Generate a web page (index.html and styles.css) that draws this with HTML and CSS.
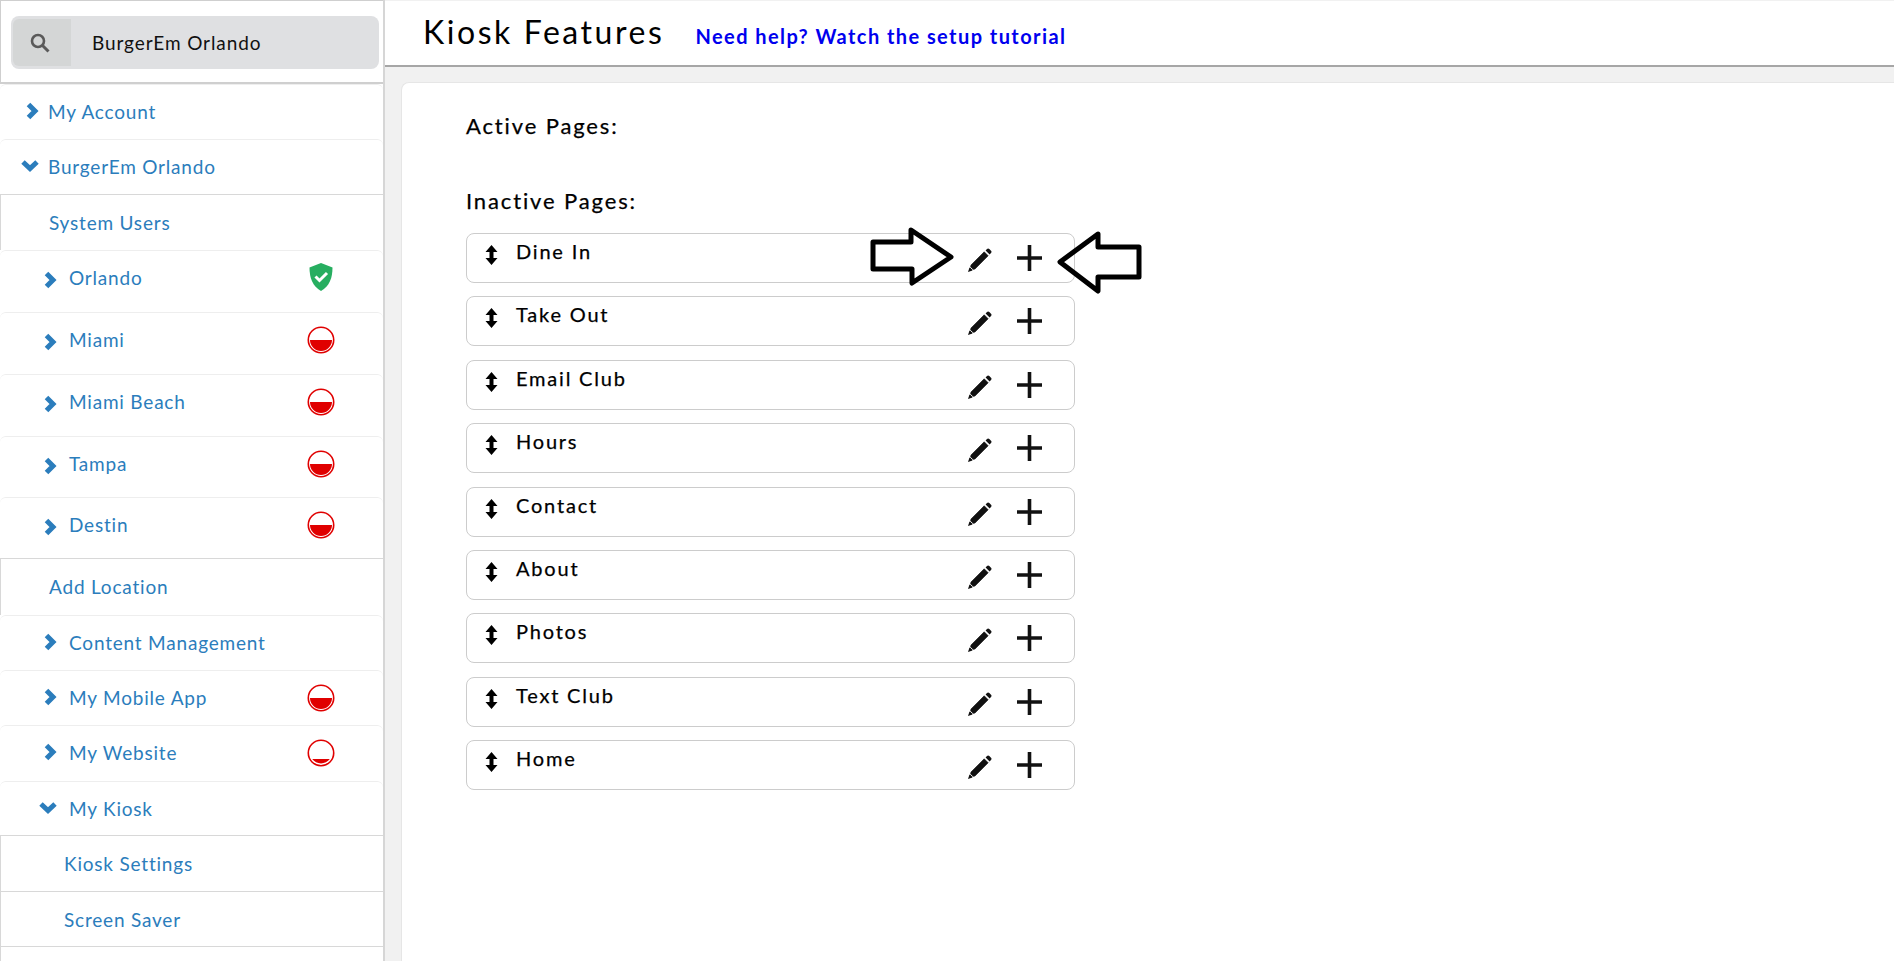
FILE: index.html
```html
<!DOCTYPE html>
<html lang="en">
<head>
<meta charset="utf-8">
<title>Kiosk Features</title>
<link rel="stylesheet" href="styles.css">
</head>
<body>
<svg width="0" height="0" class="defs">
  <symbol id="right" viewBox="0 0 18 18"><polyline points="7.5,2.5 14,9 7.5,15.5" fill="none" stroke="currentColor" stroke-width="5"/></symbol>
  <symbol id="down" viewBox="0 0 18 18"><polyline points="2,5 9,11.5 16,5" fill="none" stroke="currentColor" stroke-width="5"/></symbol>
  <symbol id="half" viewBox="0 0 28 28"><circle cx="14" cy="14" r="12.7" fill="#fff" stroke="#e00000" stroke-width="1.6"/><path d="M3 14H25A11 11 0 0 1 3 14Z" fill="#e00000"/></symbol>
  <symbol id="low" viewBox="0 0 28 28"><circle cx="14" cy="14" r="12.7" fill="#fff" stroke="#e00000" stroke-width="1.6"/><path d="M5.2 20H22.800A11 11 0 0 1 5.2 20Z" fill="#e00000"/></symbol>
  <symbol id="sort" viewBox="0 0 13 20"><path d="M6.500 0L12.500 7H8.500V13H12.500L6.500 20L.5 13H4.500V7H.5Z" fill="#000"/></symbol>
  <symbol id="pencil" viewBox="0 0 25 25"><path d="M17.200 3.800L21.200 7.800L8 21L2.800 22.200L4 17Z" fill="#111" stroke="#111" stroke-width=".6"/><path d="M18.600 2.400L20 1C20.700.3 21.600.3 22.300 1L24 2.700C24.700 3.400 24.700 4.300 24 5L22.600 6.400Z" fill="#111"/><path d="M3.300 19.200L5.800 21.700" stroke="#fff" stroke-width="1"/><path d="M1 24L2.500 19.500L5.500 22.500Z" fill="#111"/></symbol>
  <symbol id="plus" viewBox="0 0 25 26"><path d="M10.700 0H14.300V11.200H25V14.800H14.300V26H10.700V14.800H0V11.200H10.700Z" fill="#111"/></symbol>
</svg>

<aside class="sidebar">
  <div class="search">
    <div class="search-box">
      <span class="search-icon">
        <svg width="20" height="20" viewBox="0 0 20 20"><circle cx="8" cy="8" r="6" fill="none" stroke="#5a5a5a" stroke-width="2.600"/><path d="M12.500 12.500L18.500 18.500" stroke="#5a5a5a" stroke-width="3"/></svg>
      </span>
      <span class="search-text">BurgerEm Orlando</span>
    </div>
  </div>
  <nav class="menu">
    <a class="item top"><svg class="chev"><use href="#right"/></svg><span>My Account</span></a>
    <a class="item top rule"><svg class="chev"><use href="#down"/></svg><span>BurgerEm Orlando</span></a>
    <a class="item sub"><span>System Users</span></a>
    <a class="item nested loc"><svg class="chev"><use href="#right"/></svg><span>Orlando</span>
      <svg class="badge shield" viewBox="0 0 24 28"><path d="M12 0L23.500 4.500C23.500 15 20.500 23 12 28C3.500 23 .5 15 .5 4.500Z" fill="#27ae60"/><path d="M6.500 13.500L10.500 17.500L18 10" fill="none" stroke="#fff" stroke-width="3"/></svg>
    </a>
    <a class="item nested loc"><svg class="chev"><use href="#right"/></svg><span>Miami</span><svg class="badge"><use href="#half"/></svg></a>
    <a class="item nested loc"><svg class="chev"><use href="#right"/></svg><span>Miami Beach</span><svg class="badge"><use href="#half"/></svg></a>
    <a class="item nested loc"><svg class="chev"><use href="#right"/></svg><span>Tampa</span><svg class="badge"><use href="#half"/></svg></a>
    <a class="item nested loc rule"><svg class="chev"><use href="#right"/></svg><span>Destin</span><svg class="badge"><use href="#half"/></svg></a>
    <a class="item sub"><span>Add Location</span></a>
    <a class="item nested"><svg class="chev"><use href="#right"/></svg><span>Content Management</span></a>
    <a class="item nested"><svg class="chev"><use href="#right"/></svg><span>My Mobile App</span><svg class="badge"><use href="#half"/></svg></a>
    <a class="item nested"><svg class="chev"><use href="#right"/></svg><span>My Website</span><svg class="badge"><use href="#low"/></svg></a>
    <a class="item nested rule"><svg class="chev"><use href="#down"/></svg><span>My Kiosk</span></a>
    <a class="item sub deep rule"><span>Kiosk Settings</span></a>
    <a class="item sub deep rule"><span>Screen Saver</span></a>
    <a class="item sub deep"></a>
  </nav>
</aside>

<main class="main">
  <header class="header">
    <h1 class="title">Kiosk Features</h1>
    <a class="help">Need help? Watch the setup tutorial</a>
  </header>
  <div class="body">
    <section class="card">
      <h2 class="heading">Active Pages:</h2>
      <h2 class="heading inactive">Inactive Pages:</h2>
      <ul class="pages">
        <li class="page"><svg class="sort"><use href="#sort"/></svg><span class="name">Dine In</span><svg class="edit"><use href="#pencil"/></svg><svg class="add"><use href="#plus"/></svg></li>
        <li class="page"><svg class="sort"><use href="#sort"/></svg><span class="name">Take Out</span><svg class="edit"><use href="#pencil"/></svg><svg class="add"><use href="#plus"/></svg></li>
        <li class="page"><svg class="sort"><use href="#sort"/></svg><span class="name">Email Club</span><svg class="edit"><use href="#pencil"/></svg><svg class="add"><use href="#plus"/></svg></li>
        <li class="page"><svg class="sort"><use href="#sort"/></svg><span class="name">Hours</span><svg class="edit"><use href="#pencil"/></svg><svg class="add"><use href="#plus"/></svg></li>
        <li class="page"><svg class="sort"><use href="#sort"/></svg><span class="name">Contact</span><svg class="edit"><use href="#pencil"/></svg><svg class="add"><use href="#plus"/></svg></li>
        <li class="page"><svg class="sort"><use href="#sort"/></svg><span class="name">About</span><svg class="edit"><use href="#pencil"/></svg><svg class="add"><use href="#plus"/></svg></li>
        <li class="page"><svg class="sort"><use href="#sort"/></svg><span class="name">Photos</span><svg class="edit"><use href="#pencil"/></svg><svg class="add"><use href="#plus"/></svg></li>
        <li class="page"><svg class="sort"><use href="#sort"/></svg><span class="name">Text Club</span><svg class="edit"><use href="#pencil"/></svg><svg class="add"><use href="#plus"/></svg></li>
        <li class="page"><svg class="sort"><use href="#sort"/></svg><span class="name">Home</span><svg class="edit"><use href="#pencil"/></svg><svg class="add"><use href="#plus"/></svg></li>
      </ul>
    </section>
  </div>
</main>

<svg class="callouts" width="1894" height="961" viewBox="0 0 1894 961">
  <path d="M873 242H911V230L951 257L912 283V269H873Z"/>
  <path d="M1139 247H1098V234L1060 262L1098 291V277H1139Z"/>
</svg>
</body>
</html>
```

FILE: styles.css
```css
* { box-sizing: border-box; }

html, body {
  height: 100%;
  margin: 0;
  overflow: hidden;
}

body {
  display: flex;
  background: #fff;
  font-family: "Lato", "Open Sans", sans-serif;
}

.defs { position: absolute; }

/* Sidebar */
.sidebar {
  flex: 0 0 385px;
  height: 961px;
  border-right: 2px solid #d6d6d6;
  overflow: hidden;
}

.search {
  height: 84px;
  padding: 15px 4px 0 10px;
  border: 1px solid #cfcfcf;
  border-width: 1px 0 2px 1px;
}

.search-box {
  display: flex;
  align-items: center;
  height: 53px;
  padding: 3px 0 3px 2px;
  border-radius: 8px;
  background: #dfe0e2;
}

.search-icon {
  display: flex;
  align-items: center;
  justify-content: center;
  width: 58px;
  height: 47px;
  padding-right: 4px;
  background: #d4d6d6;
  border-radius: 6px 0 0 6px;
}

.search-text {
  margin-left: 21px;
  font-size: 19px;
  letter-spacing: .9px;
  color: #111;
}

.menu { display: flex; flex-direction: column; }

.item {
  display: flex;
  align-items: flex-start;
  flex: 0 0 auto;
  height: 55.400px;
  padding: 15px 48px 0 21px;
  border-top: 1px solid #eeeeee;
  border-radius: 6px 6px 0 0;
  color: #2b7dbc;
  font-size: 19px;
  line-height: 24px;
  letter-spacing: .8px;
}

.nested { padding-left: 39px; }

.loc { height: 61.800px; }

.rule { border-bottom: 1px solid #d8d8d8; }

.sub {
  padding-left: 48px;
  border-left: 1px solid #d8d8d8;
  border-radius: 0;
  border-top: 0;
  padding-top: 16px;
}

.sub.deep { padding-left: 63px; }

.chev {
  flex: 0 0 18px;
  width: 18px;
  height: 18px;
  margin: 2px 9px 0 0;
}

.nested .chev { margin-right: 12px; }

.loc .chev { margin-top: 5px; }

.badge {
  width: 28px;
  height: 28px;
  margin-top: -2px;
  margin-left: auto;
}

.shield {
  width: 24px;
  margin-right: 2px;
  margin-top: -3px;
}

/* Main */
.main {
  flex: 1;
  display: flex;
  flex-direction: column;
  min-width: 0;
  height: 961px;
  background: #f1f1f1;
}

.header {
  display: flex;
  align-items: baseline;
  flex: 0 0 67px;
  padding: 12px 0 0 38px;
  background: #fff;
  border-top: 1px solid #f1f1f1;
  border-bottom: 2px solid #a6a6a6;
}

.title {
  margin: 0;
  font-size: 32px;
  font-weight: 400;
  line-height: 38px;
  letter-spacing: 2.550px;
  color: #000;
}

.help {
  margin-left: 31px;
  font-size: 20px;
  font-weight: 700;
  letter-spacing: 1.430px;
  color: #0000ee;
}

.body {
  flex: 1;
  padding: 15px 0 0 16px;
  min-height: 0;
}

.card {
  height: 100%;
  padding: 30px 0 0 64px;
  background: #fff;
  border-top: 1px solid #e6e6e6;
  border-left: 1px solid #e6e6e6;
  border-top-left-radius: 8px;
}

.heading {
  margin: 0;
  font-size: 22px;
  font-weight: 400;
  line-height: 26px;
  letter-spacing: 1.870px;
  color: #000;
  -webkit-text-stroke: .25px #000;
}

.inactive { margin-top: 49px; }

.pages {
  display: flex;
  flex-direction: column;
  gap: 13.400px;
  width: 609px;
  margin: 19px 0 0;
  padding: 0;
  list-style: none;
}

.page {
  display: flex;
  align-items: flex-start;
  height: 50px;
  padding: 0 32px 0 18px;
  border: 1px solid #cccccc;
  border-radius: 8px;
  color: #000;
}

.sort {
  flex: 0 0 13px;
  width: 13px;
  height: 20px;
  margin-top: 11px;
}

.name {
  margin: 5px 0 0 18px;
  font-size: 20px;
  line-height: 24px;
  letter-spacing: 1.800px;
  -webkit-text-stroke: .25px #000;
}

.edit {
  width: 25px;
  height: 25px;
  margin: 14px 0 0 auto;
}

.add {
  width: 25px;
  height: 26px;
  margin: 11px 0 0 25px;
}

/* Hand-drawn annotation arrows */
.callouts {
  position: absolute;
  left: 0;
  top: 0;
  pointer-events: none;
}

.callouts path {
  fill: #fff;
  fill-opacity: 0;
  stroke: #000;
  stroke-width: 5px;
  stroke-linejoin: round;
}
```
